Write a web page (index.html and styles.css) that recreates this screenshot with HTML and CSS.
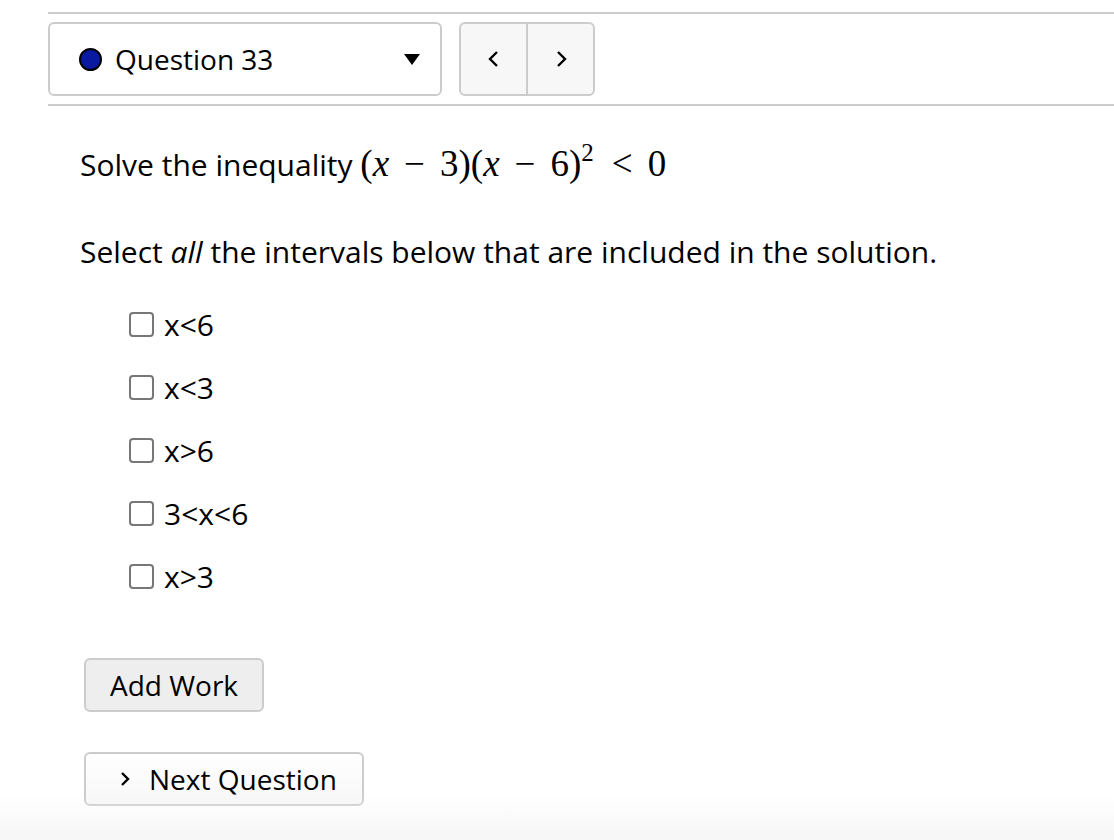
FILE: index.html
```html
<!DOCTYPE html>
<html>
<head>
<meta charset="utf-8">
<link rel="stylesheet" href="styles.css">
</head>
<body>
<div class="page">
  <div class="topbar">
    <div class="select">
      <span class="dot"></span>
      <span class="qlabel">Question 33</span>
      <span class="caret"></span>
    </div>
    <div class="nav">
      <div class="navbtn">
        <svg width="14" height="20" viewBox="0 0 14 20"><path d="M10 3 L3 10 L10 17" fill="none" stroke="#000" stroke-width="2.4"/></svg>
      </div>
      <div class="navbtn">
        <svg width="14" height="20" viewBox="0 0 14 20"><path d="M4 3 L11 10 L4 17" fill="none" stroke="#000" stroke-width="2.4"/></svg>
      </div>
    </div>
  </div>
  <div class="content">
    <p class="question">Solve the inequality <span class="math">(<i>x</i><span class="op">−</span>3)(<i>x</i><span class="op">−</span>6)<sup>2</sup><span class="op">&lt;</span>0</span></p>
    <p class="instr">Select <i>all</i> the intervals below that are included in the solution.</p>
    <ul class="options">
      <li><span class="box"></span>x&lt;6</li>
      <li><span class="box"></span>x&lt;3</li>
      <li><span class="box"></span>x&gt;6</li>
      <li><span class="box"></span>3&lt;x&lt;6</li>
      <li><span class="box"></span>x&gt;3</li>
    </ul>
    <div class="btnrow"><button class="btn addwork">Add Work</button></div>
    <div class="btnrow"><button class="btn next"><svg width="14" height="20" viewBox="0 0 14 20"><path d="M4 4 L10 10 L4 16" fill="none" stroke="#000" stroke-width="2.4"/></svg><span>Next Question</span></button></div>
  </div>
</div>
<div class="fade"></div>
</body>
</html>
```

FILE: styles.css
```css
html, body {
  margin: 0;
  padding: 0;
  background: #fff;
}
body {
  font-family: "Open Sans", "Liberation Sans", sans-serif;
  font-size: 30px;
  color: #000;
  height: 840px;
  overflow: hidden;
}
.page {
  padding: 12px 0 0 48px;
}
.topbar {
  border-top: 2px solid #ccc;
  border-bottom: 2px solid #ccc;
  padding: 8px 0;
  display: flex;
  gap: 17px;
}
.select {
  box-sizing: border-box;
  width: 394px;
  height: 74px;
  border: 2px solid #ccc;
  border-radius: 6px;
  display: flex;
  align-items: center;
  padding-left: 29px;
  padding-right: 20px;
  font-size: 28px;
}
.dot {
  width: 19px;
  height: 19px;
  border-radius: 50%;
  background: #0a1aa0;
  border: 2px solid #000;
  margin-right: 13px;
  flex: none;
}
.qlabel {
  flex: 1;
  line-height: 1;
}
.caret {
  width: 0;
  height: 0;
  border-left: 8px solid transparent;
  border-right: 8px solid transparent;
  border-top: 11px solid #000;
}
.nav {
  box-sizing: border-box;
  width: 136px;
  height: 74px;
  border: 2px solid #ccc;
  border-radius: 6px;
  background: #f7f7f7;
  display: flex;
}
.navbtn {
  flex: 1;
  display: flex;
  align-items: center;
  justify-content: center;
}
.navbtn + .navbtn {
  border-left: 2px solid #ccc;
}
.content {
  padding-left: 32px;
}
.question {
  margin: 34px 0 0;
  line-height: 48px;
}
.math {
  font-family: "Liberation Serif", "DejaVu Serif", serif;
  font-size: 37px;
  margin-left: 0;
}
.math i {
  font-style: italic;
}
.math .op {
  margin: 0 15px;
}
.math sup {
  font-size: 25px;
  vertical-align: 15px;
  line-height: 0;
  margin-right: 3px;
}
.instr {
  margin: 43px 0 0;
  line-height: 40px;
}
.options {
  list-style: none;
  margin: 21px 0 0;
  padding: 0 0 0 49px;
}
.options li {
  display: flex;
  align-items: center;
  height: 63px;
  line-height: 1;
}
.box {
  box-sizing: border-box;
  width: 25px;
  height: 25px;
  border: 2px solid #777;
  border-radius: 4px;
  margin-right: 10px;
  flex: none;
}
.btn {
  font-family: "Open Sans", "Liberation Sans", sans-serif;
  font-size: 28px;
  color: #000;
  border: 2px solid #ccc;
  border-radius: 6px;
  height: 54px;
  padding: 0 20px;
  display: inline-flex;
  align-items: center;
  margin-left: 4px;
}
.addwork {
  background: #eee;
  margin-top: 50px;
  width: 180px;
  justify-content: center;
}
.next {
  background: linear-gradient(#fff, #f7f7f7);
  margin-top: 40px;
  width: 280px;
  padding-left: 32px;
  gap: 17px;
}
.fade {
  position: fixed;
  left: 0;
  right: 0;
  bottom: 0;
  height: 45px;
  background: linear-gradient(rgba(246,246,246,0), rgba(246,246,246,1));
  pointer-events: none;
}
```
